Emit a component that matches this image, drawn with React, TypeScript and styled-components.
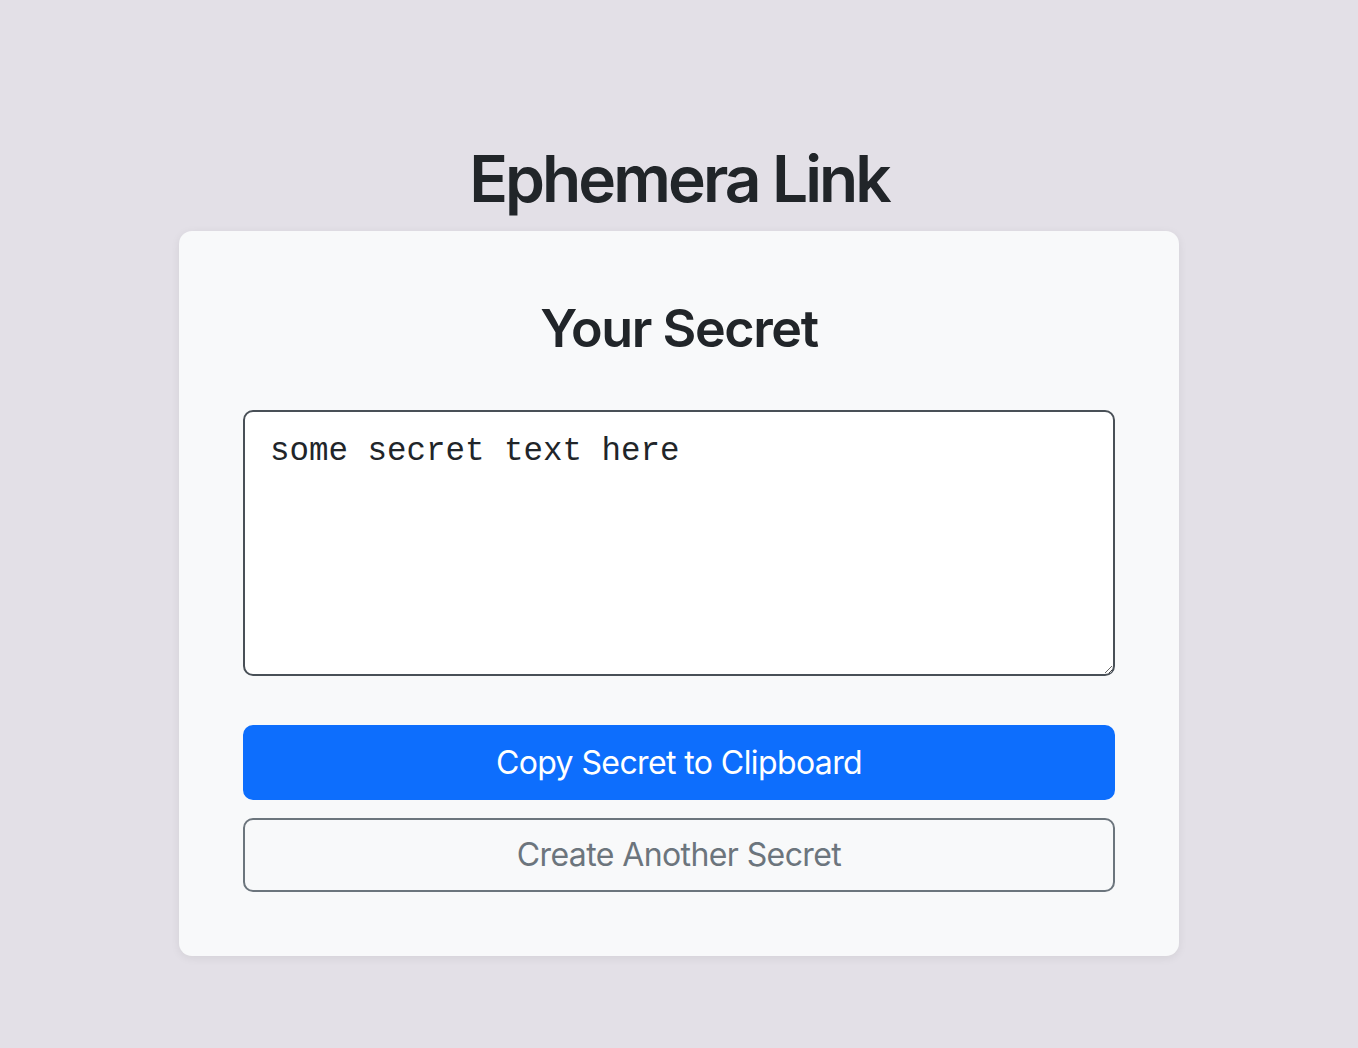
import React from "react";
import styled, { createGlobalStyle } from "styled-components";

const Global = createGlobalStyle`
  html, body { margin: 0; padding: 0; }
  body {
    background: #e3e0e7;
    font-family: Inter, "Noto Sans", "Liberation Sans", sans-serif;
    color: #212529;
    min-height: 1048px;
  }
  * { box-sizing: border-box; }
`;

const Page = styled.main`
  display: flex;
  flex-direction: column;
  align-items: center;
  padding-top: 140px;
`;

const Title = styled.h1`
  margin: 0 0 13px;
  font-size: 64px;
  font-weight: 600;
  line-height: 78px;
  letter-spacing: -2.9px;
`;

const Card = styled.section`
  width: 1000px;
  background: #f8f9fa;
  border-radius: 13px;
  box-shadow: 0 2px 10px rgba(0, 0, 0, 0.07);
  padding: 67px 64px 64px;
  display: flex;
  flex-direction: column;
`;

const Heading = styled.h2`
  margin: 0 0 50px;
  text-align: center;
  font-size: 52px;
  font-weight: 600;
  line-height: 62px;
  letter-spacing: -1.4px;
`;

const SecretBox = styled.textarea`
  display: block;
  width: 100%;
  height: 266px;
  margin: 0 0 49px;
  padding: 16px 25px 13px;
  border: 2px solid #495057;
  border-radius: 10px;
  background: #fff;
  color: #212529;
  font-family: "Liberation Mono", "DejaVu Sans Mono", monospace;
  font-size: 32.5px;
  line-height: 48px;
  resize: vertical;
  outline: none;
`;

const Button = styled.button<{ $variant: "primary" | "outline" }>`
  display: block;
  width: 100%;
  height: ${(p) => (p.$variant === "primary" ? "75px" : "74px")};
  border-radius: 10px;
  font-family: Inter, "Noto Sans", "Liberation Sans", sans-serif;
  font-size: 32px;
  font-weight: 400;
  line-height: 48px;
  letter-spacing: -0.6px;
  cursor: pointer;
  border: 2px solid ${(p) => (p.$variant === "primary" ? "#0d6efd" : "#6c757d")};
  background: ${(p) => (p.$variant === "primary" ? "#0d6efd" : "transparent")};
  color: ${(p) => (p.$variant === "primary" ? "#ffffff" : "#6c757d")};
  & + & { margin-top: 18px; }
`;

export default function App() {
  return (
    <>
      <Global />
      <Page>
        <Title>Ephemera Link</Title>
        <Card>
          <Heading>Your Secret</Heading>
          <SecretBox readOnly defaultValue="some secret text here" />
          <Button $variant="primary">Copy Secret to Clipboard</Button>
          <Button $variant="outline">Create Another Secret</Button>
        </Card>
      </Page>
    </>
  );
}
